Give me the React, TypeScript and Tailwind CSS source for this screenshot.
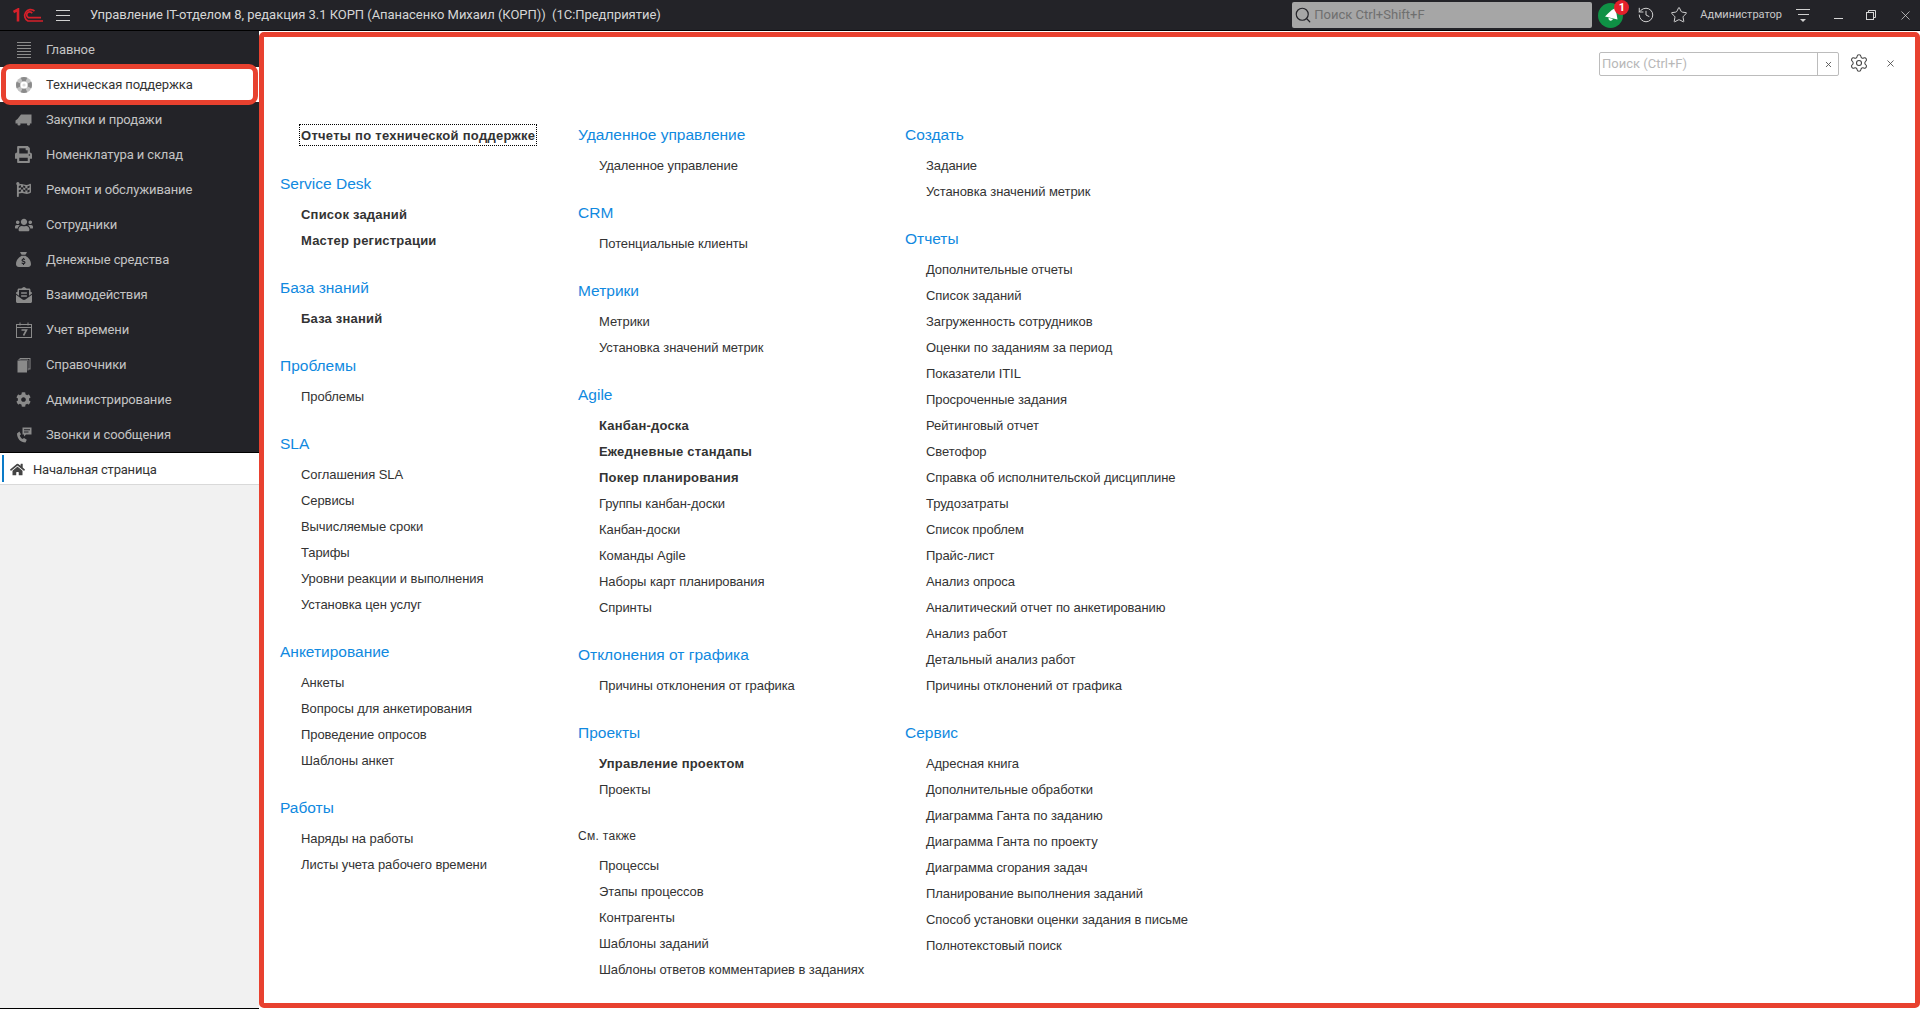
import React from "react";
import { FaPrint, FaFlagCheckered, FaUsers, FaEnvelopeOpenText, FaCog, FaHome } from "react-icons/fa";
import { FaSackDollar } from "react-icons/fa6";
import { History, Search, Settings, X, Star } from "lucide-react";

const Van = () => (
  <svg width="17" height="12" viewBox="0 0 17 12" fill="currentColor">
    <path d="M6 0.5 H16.5 V9.5 H0.5 V6.5 L2.5 5 Z" />
    <circle cx="4" cy="10" r="1.6" />
    <circle cx="13.5" cy="10" r="1.6" />
  </svg>
);
const Stack = () => (
  <svg width="14" height="16" viewBox="0 0 14 16" fill="currentColor">
    <rect x="0.5" y="3.5" width="9.5" height="12" />
    <path d="M3 2.2 V1 H13.5 V12.5 H11.2 V11.5 H12.5 V2 H4 V2.2 Z" />
    <path d="M2 3 V2 H3 M11 13.5 V3 H2.5" fill="none" stroke="currentColor" strokeWidth="0.8" />
  </svg>
);
const Ring = () => (
  <svg width="16" height="16" viewBox="0 0 16 16">
    <circle cx="8" cy="8" r="8" fill="#c4c4c4" />
    <path d="M4.8 0.7 A8 8 0 0 1 11.2 0.7 L9.6 4.4 H6.4 Z M15.3 4.8 A8 8 0 0 1 15.3 11.2 L11.6 9.6 V6.4 Z M11.2 15.3 A8 8 0 0 1 4.8 15.3 L6.4 11.6 H9.6 Z M0.7 11.2 A8 8 0 0 1 0.7 4.8 L4.4 6.4 V9.6 Z" fill="#8a8a8a" />
    <circle cx="8" cy="8" r="3.6" fill="#ffffff" />
    <circle cx="8" cy="8" r="1.6" fill="#dcdcdc" />
  </svg>
);
const Horn = () => (
  <svg width="16" height="16" viewBox="0 0 16 16" fill="#ffffff">
    <path d="M12.5 1 L14.5 12.5 L2 9.5 L5 6.5 Q7.5 3 12.5 1 Z" />
    <path d="M5.5 10.8 L10 11.9 Q9 14.2 6.8 13.6 Q5.2 13 5.5 10.8 Z" />
  </svg>
);
const PhoneChat = () => (
  <svg width="16" height="16" viewBox="0 0 16 16" fill="currentColor">
    <path d="M1 6.5 C1 11.5 4.5 15.5 9.5 15.5 L10.8 12.8 L8 11 L6.5 12 C5 11 4.2 9.8 3.8 8.5 L5 7.2 L3.4 4.4 Z" />
    <path d="M6.5 0.5 H15.5 V7.5 H10 L8 9.5 V7.5 H6.5 Z M8 2.2 V3.2 H14 V2.2 Z M8 4.5 V5.5 H12.5 V4.5 Z" fillRule="evenodd" />
  </svg>
);

const sideItems: [string, React.ReactNode][] = [
  ["Закупки и продажи", <Van />],
  ["Номенклатура и склад", <FaPrint size={17} />],
  ["Ремонт и обслуживание", <FaFlagCheckered size={15} />],
  ["Сотрудники", <FaUsers size={18} />],
  ["Денежные средства", <FaSackDollar size={15} />],
  ["Взаимодействия", <FaEnvelopeOpenText size={16} />],
  ["Учет времени", <svg width="16" height="16" viewBox="0 0 16 16" fill="none" stroke="currentColor"><rect x="0.5" y="2.5" width="15" height="13" /><path d="M0.5 5.5h15M4 0.5v3M12 0.5v3" /><path d="M5.5 8h5l-3 5.5" strokeWidth="1.6" /></svg>],
  ["Справочники", <Stack />],
  ["Администрирование", <FaCog size={15} />],
  ["Звонки и сообщения", <PhoneChat />],
];

type Sec = { t: string; l: (string | [string])[] };
const col1: Sec[] = [
  { t: "Service Desk", l: [["Список заданий"], ["Мастер регистрации"]] },
  { t: "База знаний", l: [["База знаний"]] },
  { t: "Проблемы", l: ["Проблемы"] },
  { t: "SLA", l: ["Соглашения SLA", "Сервисы", "Вычисляемые сроки", "Тарифы", "Уровни реакции и выполнения", "Установка цен услуг"] },
  { t: "Анкетирование", l: ["Анкеты", "Вопросы для анкетирования", "Проведение опросов", "Шаблоны анкет"] },
  { t: "Работы", l: ["Наряды на работы", "Листы учета рабочего времени"] },
];
const col2: Sec[] = [
  { t: "Удаленное управление", l: ["Удаленное управление"] },
  { t: "CRM", l: ["Потенциальные клиенты"] },
  { t: "Метрики", l: ["Метрики", "Установка значений метрик"] },
  { t: "Agile", l: [["Канбан-доска"], ["Ежедневные стандапы"], ["Покер планирования"], "Группы канбан-доски", "Канбан-доски", "Команды Agile", "Наборы карт планирования", "Спринты"] },
  { t: "Отклонения от графика", l: ["Причины отклонения от графика"] },
  { t: "Проекты", l: [["Управление проектом"], "Проекты"] },
];
const col3: Sec[] = [
  { t: "Создать", l: ["Задание", "Установка значений метрик"] },
  { t: "Отчеты", l: ["Дополнительные отчеты", "Список заданий", "Загруженность сотрудников", "Оценки по заданиям за период", "Показатели ITIL", "Просроченные задания", "Рейтинговый отчет", "Светофор", "Справка об исполнительской дисциплине", "Трудозатраты", "Список проблем", "Прайс-лист", "Анализ опроса", "Аналитический отчет по анкетированию", "Анализ работ", "Детальный анализ работ", "Причины отклонений от графика"] },
  { t: "Сервис", l: ["Адресная книга", "Дополнительные обработки", "Диаграмма Ганта по заданию", "Диаграмма Ганта по проекту", "Диаграмма сгорания задач", "Планирование выполнения заданий", "Способ установки оценки задания в письме", "Полнотекстовый поиск"] },
];
const seeAlso = ["Процессы", "Этапы процессов", "Контрагенты", "Шаблоны заданий", "Шаблоны ответов комментариев в заданиях"];

function Link({ v }: { v: string | [string] }) {
  const bold = Array.isArray(v);
  return (
    <div className={`h-[26px] pl-[21px] leading-[26px] text-[13px] text-[#333333] whitespace-nowrap ${bold ? "font-bold tracking-[0.2px]" : "-tracking-[0.08px]"}`}>
      {bold ? v[0] : v}
    </div>
  );
}

function Section({ s }: { s: Sec }) {
  return (
    <div className="mb-4">
      <div className="h-9 leading-[36px] text-[15.5px] text-[#1089e0] whitespace-nowrap">{s.t}</div>
      {s.l.map((v, i) => <Link key={i} v={v} />)}
    </div>
  );
}

export default function App() {
  return (
    <div className="w-[1920px] h-[1009px] overflow-hidden flex flex-col bg-white font-['Liberation_Sans',Arial,sans-serif]">
      <header className="h-[31px] shrink-0 bg-[#232328] border-b border-black flex items-center text-[#d6d6d6] font-['Roboto',sans-serif]">
        <svg className="ml-[13px] shrink-0" width="30" height="14" viewBox="0 0 30 14" fill="none" stroke="#d6202a" strokeWidth="1.7">
          <path d="M0.5 4 L5 1.5 V13.5" strokeWidth="2.6" />
          <path d="M21.5 3 A6 6 0 1 0 15 13 H30" />
          <path d="M19.2 5.2 A3 3 0 1 0 15.5 9.6 H28" />
        </svg>
        <div className="ml-[13px] w-[14px] flex flex-col gap-[4px] shrink-0">
          <div className="h-px bg-[#d0d0d0]" /><div className="h-px bg-[#d0d0d0]" /><div className="h-px bg-[#d0d0d0]" />
        </div>
        <div className="ml-[20px] text-[13px] -tracking-[0.04px] whitespace-nowrap">Управление IT-отделом 8, редакция 3.1 КОРП (Апанасенко Михаил (КОРП))&nbsp;&nbsp;(1С:Предприятие)</div>
        <div className="ml-auto w-[300px] h-[26px] rounded-[2px] bg-[#a6a6a6] flex items-center text-[#6f6f6f] text-[13px]">
          <Search size={18} className="ml-[2px] text-[#232328]" strokeWidth={1.6} />
          <span className="ml-[2px]">Поиск Ctrl+Shift+F</span>
        </div>
        <div className="relative ml-[6px] w-[25px] h-[25px] rounded-full bg-[#0f9145] flex items-center justify-center">
          <Horn />
          <div className="absolute -top-[3px] right-[-6px] w-[15px] h-[15px] rounded-full bg-[#e3202a] text-white text-[11px] font-bold leading-[15px] text-center">1</div>
        </div>
        <History size={18} className="ml-[14px]" strokeWidth={1.3} />
        <Star size={18} strokeWidth={1.3} className="ml-[15px]" />
        <div className="ml-[12px] text-[11px] text-[#c8c8c8]">Администратор</div>
        <div className="ml-[14px] w-[14px] flex flex-col items-center gap-[4px]">
          <div className="h-px w-[14px] bg-[#d0d0d0]" /><div className="h-px w-[11px] bg-[#d0d0d0]" />
          <div className="w-0 h-0 border-x-[3px] border-x-transparent border-t-[3px] border-t-[#d0d0d0]" />
        </div>
        <div className="ml-[24px] mt-[7px] w-[9px] h-px bg-[#d6d6d6]" />
        <svg className="ml-[23px]" width="10" height="10" viewBox="0 0 10 10" fill="none" stroke="currentColor"><rect x="0.5" y="2.5" width="7" height="7" /><path d="M2.5 2.5v-2h7v7h-2" /></svg>
        <X size={15} strokeWidth={1.2} className="ml-[22px] mr-[7px]" />
      </header>
      <div className="flex flex-1 min-h-0">
        <aside className="w-[259px] shrink-0 bg-[#f1f1f1] flex flex-col border-b border-black">
          <div className="bg-[#232328] pt-[1px] font-['Roboto',sans-serif] text-[13px] text-[#c4c4c4] -tracking-[0.12px]">
            <div className="h-[35px] flex items-center pl-[17px]">
              <div className="w-[14px] flex flex-col gap-[2px]">
                {[0, 1, 2, 3, 4, 5].map((i) => <div key={i} className="h-px bg-[#8c8c8c]" />)}
              </div>
              <span className="ml-[15px]">Главное</span>
            </div>
            <div className="bg-white">
              <div className="h-[35px] mx-[4px] flex items-center pl-[12px] bg-white text-[#333333] relative rounded-[6px] outline-[5px] outline-[#e8412f] -outline-offset-[2px]">
                <Ring />
                <span className="ml-[14px]">Техническая поддержка</span>
              </div>
            </div>
            {sideItems.map(([t, ic]) => (
              <div key={t} className="h-[35px] flex items-center">
                <div className="w-[48px] pr-[1px] flex justify-center text-[#8a8a8a]">{ic}</div>
                <span className="-ml-[2px]">{t}</span>
              </div>
            ))}
          </div>
          <div className="h-[33px] pt-[2px] border-y border-y-[#d9d9d9] border-t-black bg-white relative flex items-center font-['Roboto',sans-serif] text-[13px] text-[#333333] -tracking-[0.2px]">
            <div className="absolute left-[2px] top-[2px] bottom-[2px] w-[2px] bg-[#0a7bc8]" />
            <FaHome size={15} className="ml-[10px] text-[#444444]" />
            <span className="ml-[8px]">Начальная страница</span>
          </div>
        </aside>
        <main className="flex-1 min-w-0 relative mt-[1px] mb-[1px] rounded-[5px] border-[5px] border-[#e8412f]">
          <div className="absolute top-[15px] left-[1335px] w-[240px] h-[24px] rounded-[2px] border border-[#bcbcbc] flex items-stretch font-['Roboto',sans-serif]">
            <div className="flex-1 px-[2px] text-[13px] leading-[21px] text-[#b8b8b8]">Поиск (Ctrl+F)</div>
            <div className="w-[21px] border-l border-[#bcbcbc] flex items-center justify-center"><X size={9} strokeWidth={2.4} className="text-[#555555]" /></div>
          </div>
          <Settings size={20} strokeWidth={1.3} className="absolute top-[16px] left-[1585px] text-[#444444]" />
          <X size={11} strokeWidth={1.8} className="absolute top-[21px] left-[1621px] text-[#444444]" />
          <div className="flex pl-[16px] pt-[80px]">
            <div className="w-[298px] shrink-0">
              <div className="pt-[6px] mb-[19px] pl-[21px]">
                <div className="inline-block h-[20px] -ml-[1px] px-[1px] outline-1 outline-dotted outline-black leading-[21px] text-[13px] font-bold tracking-[0.27px] text-[#333333] whitespace-nowrap">Отчеты по технической поддержке</div>
              </div>
              {col1.map((s) => <Section key={s.t} s={s} />)}
            </div>
            <div className="w-[327px] shrink-0">
              {col2.map((s) => <Section key={s.t} s={s} />)}
              <div className="h-[34px] leading-[34px] text-[12px] text-[#333333] tracking-[0.3px]">См. также</div>
              {seeAlso.map((v) => <Link key={v} v={v} />)}
            </div>
            <div className="shrink-0">
              {col3.map((s) => <Section key={s.t} s={s} />)}
            </div>
          </div>
        </main>
      </div>
    </div>
  );
}
